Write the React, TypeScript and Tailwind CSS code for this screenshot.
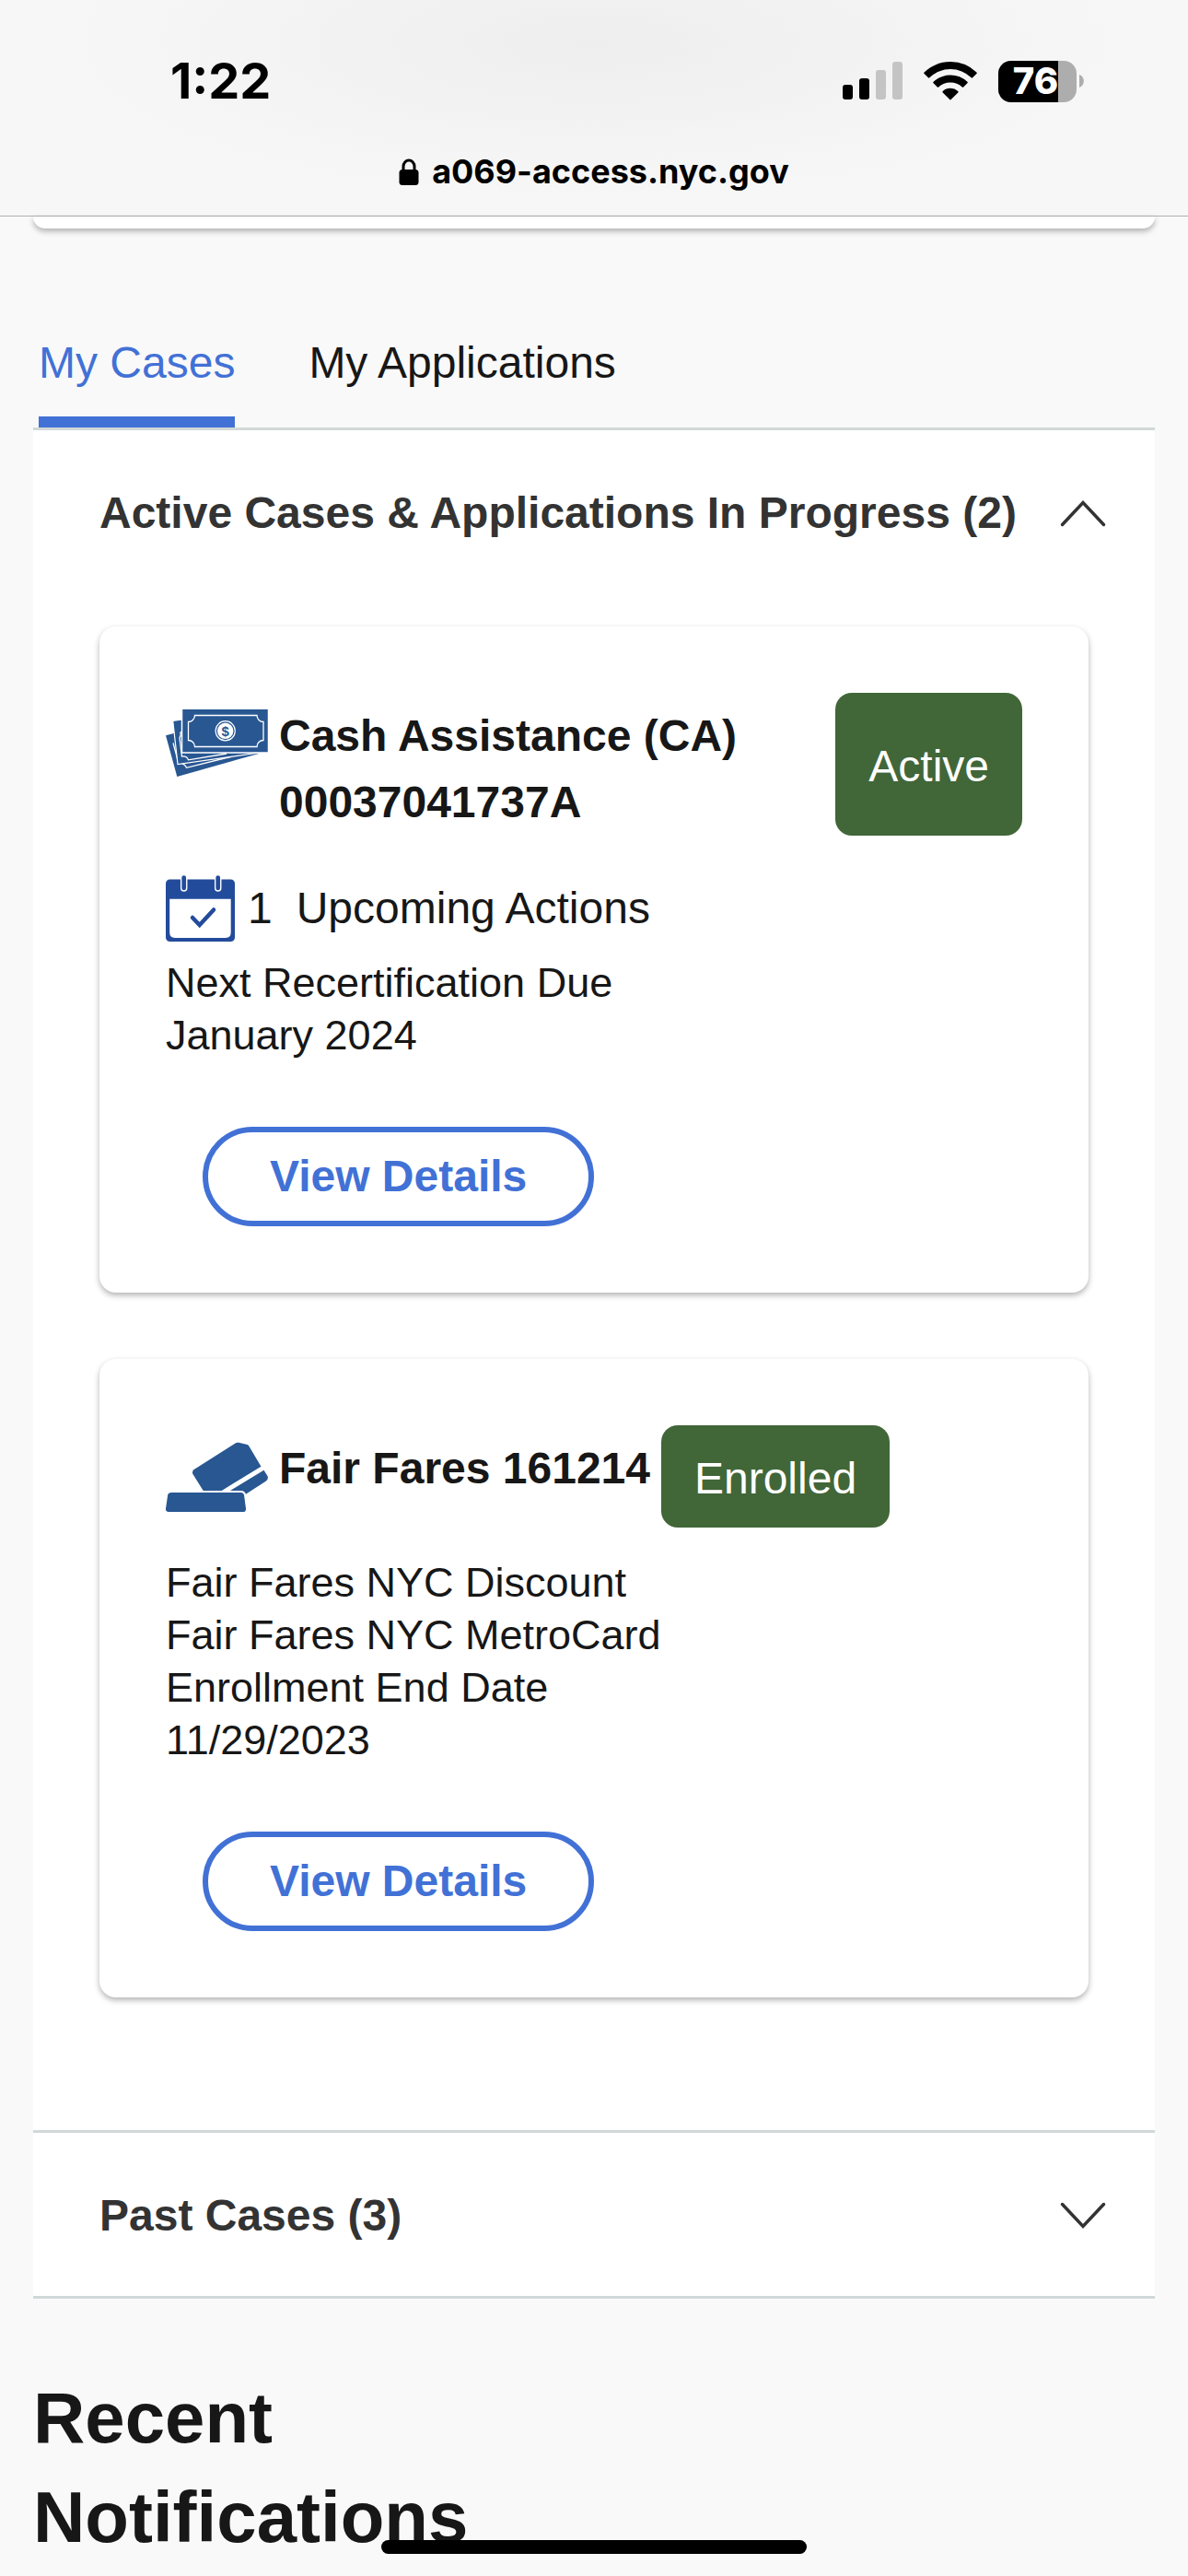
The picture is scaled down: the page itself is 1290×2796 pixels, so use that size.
import { useState, type ReactNode } from "react";
import clsx from "clsx";

type Tab = "cases" | "applications";

export default function App() {
  const [tab, setTab] = useState<Tab>("cases");
  const [activeOpen, setActiveOpen] = useState(true);
  const [pastOpen, setPastOpen] = useState(false);

  return (
    <div className="min-h-screen bg-[#f9f9f9] font-['Liberation_Sans',Arial,sans-serif] text-[48px] leading-[72px] text-[#171717]">
      <BrowserBar />

      <main className="px-9">
        {/* tail of the card scrolled under the browser bar */}
        <div className="h-[13px] rounded-b-[18px] bg-white shadow-[0_3px_6px_rgba(0,0,0,0.3)]" />

        <div role="tablist" className="mt-[110px] flex gap-20 border-b-3 border-[#d1d9d8] px-1.5">
          <TabButton label="My Cases" active={tab === "cases"} onClick={() => setTab("cases")} />
          <TabButton
            label="My Applications"
            active={tab === "applications"}
            onClick={() => setTab("applications")}
          />
        </div>

        <Section
          title="Active Cases & Applications In Progress (2)"
          open={activeOpen}
          onToggle={() => setActiveOpen(!activeOpen)}
        >
          <div className="flex flex-col gap-[72px] px-[72px] pt-9 pb-36">
            <CaseCard icon={<CashIcon />} title="Cash Assistance (CA) 00037041737A" status="Active">
              <div className="mt-[43px] flex items-center">
                <CalendarIcon />
                <span className="ml-3.5">1</span>
                <span className="ml-[26px]">Upcoming Actions</span>
              </div>
              <p className="mt-4 text-[45px] leading-[57px]">
                Next Recertification Due
                <br />
                January 2024
              </p>
            </CaseCard>

            <CaseCard icon={<FareIcon />} title="Fair Fares 161214" status="Enrolled">
              <p className="mt-[31px] text-[45px] leading-[57px]">
                Fair Fares NYC Discount
                <br />
                Fair Fares NYC MetroCard
                <br />
                Enrollment End Date
                <br />
                11/29/2023
              </p>
            </CaseCard>
          </div>
        </Section>

        <Section title="Past Cases (3)" open={pastOpen} onToggle={() => setPastOpen(!pastOpen)} />

        <h1 className="mt-[75px] w-1/2 text-[78px] leading-[108px] font-bold">Recent Notifications</h1>
      </main>

      <div className="fixed bottom-6 left-1/2 h-[15px] w-[462px] -translate-x-1/2 rounded-full bg-black" />
    </div>
  );
}

function BrowserBar() {
  return (
    <header className="border-b border-[#b0b0b0] bg-[#f7f7f7] bg-[radial-gradient(ellipse_at_50%_20%,#eeeeee_0%,#f3f3f3_35%,#f7f7f7_65%)] pt-[58px] pb-6 font-[Inter,sans-serif] font-bold text-black">
      <div className="flex items-center justify-between pr-[113px] pl-[185px]">
        <span className="text-[54px] leading-[60px]">1:22</span>
        <div className="flex items-center gap-[23px]">
          <SignalIcon />
          <WifiIcon />
          <Battery level={76} />
        </div>
      </div>
      <div className="mt-11 flex items-center justify-center gap-3.5">
        <svg width="22" height="29" viewBox="0 0 22 29" aria-hidden="true">
          <path d="M5 14V8.500a6 6.500 0 0 1 12 0V14" fill="none" stroke="black" strokeWidth="3" />
          <rect x="0.500" y="12" width="21" height="17" rx="3.500" />
        </svg>
        <span className="text-[36px] leading-[48px]">a069-access.nyc.gov</span>
      </div>
    </header>
  );
}

function SignalIcon() {
  return (
    <svg width="65" height="42" viewBox="0 0 65 42" aria-hidden="true">
      <rect y="25" width="11" height="16" rx="3" />
      <rect x="18" y="18" width="11" height="23" rx="3" />
      <rect x="36" y="9" width="11" height="32" rx="3" fill="#c4c4c4" />
      <rect x="54" y="0" width="11" height="41" rx="3" fill="#c4c4c4" />
    </svg>
  );
}

function WifiIcon() {
  return (
    <svg width="58" height="42" viewBox="0 0 58 42" aria-hidden="true">
      <path d="M29 0C18 0 8 4.300 .600 11.500a1 1 0 0 0 0 1.500l4.300 4.300a1 1 0 0 0 1.400 0A32.500 32.500 0 0 1 51.700 17.300a1 1 0 0 0 1.400 0l4.300-4.300a1 1 0 0 0 0-1.500A40.500 40.500 0 0 0 29 0Z" />
      <path d="M29 14.500c-7 0-13.500 2.700-18.400 7.300a1 1 0 0 0 0 1.500l4.200 4.200a1 1 0 0 0 1.400 0a18.800 18.800 0 0 1 25.600 0a1 1 0 0 0 1.400 0l4.200-4.200a1 1 0 0 0 0-1.500A26.800 26.800 0 0 0 29 14.500Z" />
      <path d="M29 28.800c-3.200 0-6.100 1.200-8.300 3.100a1 1 0 0 0 0 1.500l7.600 7.700a1 1 0 0 0 1.400 0l7.600-7.700a1 1 0 0 0 0-1.500A12.600 12.600 0 0 0 29 28.800Z" />
    </svg>
  );
}

function Battery({ level }: { level: number }) {
  return (
    <div className="flex items-center gap-[3px]">
      <div className="relative h-[45px] w-[85px]">
        <div className="h-full overflow-hidden rounded-[14px] bg-[#adadad]">
          <div className="h-full bg-black" style={{ width: `${level}%` }} />
        </div>
        <span className="absolute inset-0 flex items-center justify-center pr-1 text-[40px] leading-[48px] font-extrabold text-white">
          {level}
        </span>
      </div>
      <svg width="5" height="14" viewBox="0 0 5 14" aria-hidden="true">
        <path d="M0 0a7.500 7.500 0 0 1 0 14Z" fill="#adadad" />
      </svg>
    </div>
  );
}

function TabButton({ label, active, onClick }: { label: string; active: boolean; onClick: () => void }) {
  return (
    <button
      role="tab"
      aria-selected={active}
      onClick={onClick}
      className={clsx(
        "cursor-pointer border-b-12 pb-[22px]",
        active ? "border-[#4271d6] text-[#4271d6]" : "border-transparent",
      )}
    >
      {label}
    </button>
  );
}

function Section({
  title,
  open,
  onToggle,
  children,
}: {
  title: string;
  open: boolean;
  onToggle: () => void;
  children?: ReactNode;
}) {
  return (
    <section className="border-b-3 border-[#d1d9d8] bg-white">
      <h2>
        <button
          aria-expanded={open}
          onClick={onToggle}
          className="flex h-[177px] w-full cursor-pointer items-center justify-between pt-0.5 pr-[53px] pl-[72px] text-left font-bold text-[#333333]"
        >
          {title}
          <svg width="50" height="30" viewBox="0 0 50 30" className={clsx(!open && "rotate-180")} aria-hidden="true">
            <path d="M2.500 27.500 25 3.500l22.500 24" fill="none" stroke="#333333" strokeWidth="3.500" strokeLinecap="round" />
          </svg>
        </button>
      </h2>
      {open && children}
    </section>
  );
}

function CaseCard({
  icon,
  title,
  status,
  children,
}: {
  icon: ReactNode;
  title: string;
  status: string;
  children: ReactNode;
}) {
  return (
    <article className="rounded-[18px] bg-white p-[72px] shadow-[0_3px_6px_rgba(0,0,0,0.3)]">
      <div className="flex gap-3">
        <div className="shrink-0 pt-[18px]">{icon}</div>
        <h3 className="pt-[11px] font-bold">{title}</h3>
        <span className="flex min-h-[111px] shrink-0 items-center rounded-[18px] bg-[#416638] px-9 pt-1 text-white">
          {status}
        </span>
      </div>
      {children}
      <button className="mt-[71px] ml-10 block h-[108px] cursor-pointer rounded-full border-6 border-[#4271d6] px-[67px] font-bold text-[#4271d6]">
        View Details
      </button>
    </article>
  );
}

function CashIcon() {
  return (
    <svg width="111" height="74" viewBox="0 0 111 74" aria-hidden="true">
      <path d="M0 28.300 20 23 101 48 12.300 73Z" fill="#285792" />
      <path d="M8 36.500 14 58.500c4-.500 7 1.500 8.500 4.800L72 51" fill="none" stroke="white" strokeWidth="1.300" />
      <path d="M7.700 12.300 18 11l80 36.500L13 59.500Z" fill="#285792" stroke="white" strokeWidth="1.200" />
      <path d="M18 24.500 16 25c.500 3 .500 4-1 6l2.500 20c4-.500 6 1 7 3.800L66 48" fill="none" stroke="white" strokeWidth="1.300" />
      <rect x="17.500" y="-1" width="94" height="48" fill="#285792" stroke="white" strokeWidth="1.500" />
      <path
        d="M31.500 6.500H99a7 7 0 0 0 7 7V33.500a7 7 0 0 0-7 7H31.500a7 7 0 0 0-7-7V13.500a7 7 0 0 0 7-7Z"
        fill="none"
        stroke="white"
        strokeWidth="1.300"
      />
      <circle cx="64.700" cy="23.300" r="10.600" fill="none" stroke="white" strokeWidth="1.200" />
      <circle cx="64.700" cy="23.300" r="8.700" fill="white" />
      <text x="64.700" y="28.500" textAnchor="middle" fontSize="15" fontWeight="700" fill="#285792">
        $
      </text>
    </svg>
  );
}

function FareIcon() {
  return (
    <svg width="111" height="77" viewBox="0 0 111 77" fill="#285792" aria-hidden="true">
      <path d="M76 1.200Q77.300.500 79 .800L88.500 2.900Q89.500 3.200 90 4L103.500 26.700 60.700 53H40.700L29.300 34.800Q28.300 32.500 30.300 30.300Z" />
      <path d="M106.500 30.700 110.300 36.800Q112 39.800 109 42.400L86.900 56.700Q85.500 53 82 53H70Z" />
      <path d="M5.500 55H82Q84.600 55 85 57.500L87 72.500Q87.200 76 84 76H3Q-.200 76 0 72.500L2.200 57.500Q2.700 55 5.500 55Z" />
    </svg>
  );
}

function CalendarIcon() {
  return (
    <svg width="75" height="72" viewBox="0 0 75 72" aria-hidden="true">
      <rect y="4.500" width="75" height="67.500" rx="4.500" fill="#234b9b" />
      <path d="M4.200 25.700H70.700V62Q70.700 68 64.700 68H10.200Q4.200 68 4.200 62Z" fill="white" />
      <g strokeLinecap="round" fill="none">
        <path d="M19.700 3V14M56.700 3V14" stroke="white" strokeWidth="7.500" />
        <path d="M19.700 2.500V14M56.700 2.500V14" stroke="#234b9b" strokeWidth="4.700" />
        <path d="M29 46 36.700 54 52 37.500" stroke="#234b9b" strokeWidth="4.500" />
      </g>
    </svg>
  );
}
